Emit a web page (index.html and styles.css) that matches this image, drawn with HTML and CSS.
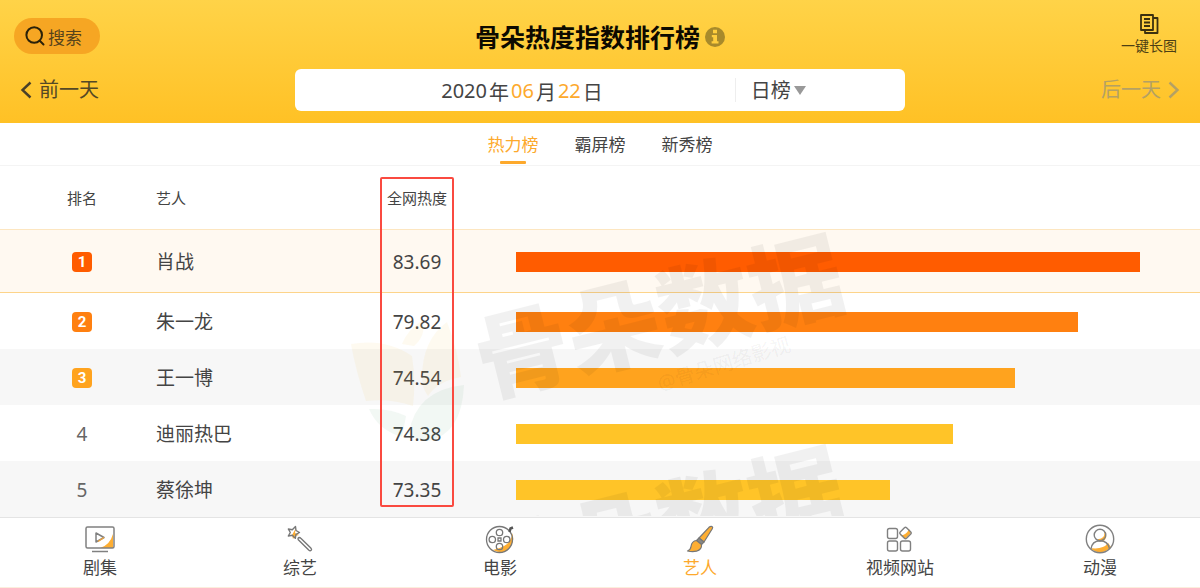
FILE: index.html
```html
<!DOCTYPE html>
<html lang="zh-CN">
<head>
<meta charset="utf-8">
<meta name="viewport" content="width=device-width, initial-scale=1">
<title>骨朵热度指数排行榜</title>
<link rel="stylesheet" href="styles.css">
</head>
<body>
<header class="header">
  <div class="header-top">
    <button class="search" type="button">
      <svg width="20" height="20" viewBox="0 0 20 20" fill="none" stroke="#2b2109" stroke-width="2" stroke-linecap="round"><circle cx="9.200" cy="9" r="7.800"/><path d="M15 15l3.500 3.500"/></svg>
      搜索
    </button>
    <div class="title-group">
      <h1 class="title">骨朵热度指数排行榜</h1>
      <button class="info" type="button" aria-label="说明">
        <svg width="20" height="20" viewBox="0 0 20 20"><circle cx="10" cy="10" r="10" fill="#a88a2b"/><path fill="#ffce3d" d="M8 2.800h4v3.400H8zM6.800 8H12v6.300h1.500v2.200H6.600v-2.200h1.600v-4.100H6.800z"/></svg>
      </button>
    </div>
    <button class="long-image" type="button">
      <svg width="19" height="20" viewBox="0 0 19 20" fill="none" stroke="#3b300f" stroke-width="1.800" stroke-linejoin="round"><path d="M1 1h12v15H1zM13 4h4.500v15H5v-3M4 5h6M4 8.500h6M4 12h6"/></svg>
      一键长图
    </button>
  </div>
  <div class="header-date">
    <button class="day prev" type="button">
      <svg width="12" height="18" viewBox="0 0 12 18" fill="none" stroke="#4a4028" stroke-width="2.400"><path d="M10.500 1.500L2.500 9l8 7.500"/></svg>
      前一天
    </button>
    <div class="picker">
      <button class="date" type="button"><span>2020</span><span>年</span><span class="accent">06</span><span>月</span><span class="accent">22</span><span>日</span></button>
      <label class="period">
        <select class="period-select" aria-label="榜单周期"><option>日榜</option><option>周榜</option><option>月榜</option></select>
        <svg width="12" height="9" viewBox="0 0 12 9"><path d="M0 0h12L6 9z" fill="#999"/></svg>
      </label>
    </div>
    <button class="day next" type="button" disabled>
      后一天
      <svg width="12" height="18" viewBox="0 0 12 18" fill="none" stroke="#b4a164" stroke-width="2.400"><path d="M1.500 1.500l8 7.500-8 7.500"/></svg>
    </button>
  </div>
</header>

<nav class="tabs" aria-label="榜单">
  <a class="tab active" href="#hot">热力榜</a>
  <a class="tab" href="#screen">霸屏榜</a>
  <a class="tab" href="#new">新秀榜</a>
</nav>

<main class="board">
  <table class="ranking">
    <thead>
      <tr><th class="rank">排名</th><th class="artist">艺人</th><th class="heat">全网热度</th><th class="chart" aria-label="热度图"></th></tr>
    </thead>
    <tbody>
      <tr class="top"><td class="rank"><span class="badge first">1</span></td><td class="artist">肖战</td><td class="heat">83.69</td><td class="chart"><div class="bar first" style="width:100%"></div></td></tr>
      <tr><td class="rank"><span class="badge second">2</span></td><td class="artist">朱一龙</td><td class="heat">79.82</td><td class="chart"><div class="bar second" style="width:90%"></div></td></tr>
      <tr><td class="rank"><span class="badge third">3</span></td><td class="artist">王一博</td><td class="heat">74.54</td><td class="chart"><div class="bar third" style="width:80%"></div></td></tr>
      <tr><td class="rank">4</td><td class="artist">迪丽热巴</td><td class="heat">74.38</td><td class="chart"><div class="bar" style="width:70%"></div></td></tr>
      <tr><td class="rank">5</td><td class="artist">蔡徐坤</td><td class="heat">73.35</td><td class="chart"><div class="bar" style="width:60%"></div></td></tr>
    </tbody>
  </table>
  <svg class="watermark" width="520" height="350" viewBox="0 0 520 350" aria-hidden="true">
    <g fill="#f0c040" fill-opacity=".08">
      <path d="M3 178Q38 172 64 190Q68 215 65 240Q42 232 18 235Q8 206 3 178z"/>
      <path d="M54 178Q60 163 75 154Q78 170 66 180z"/>
      <path d="M74 212Q74 174 99 156Q110 184 113 211Q90 215 80 230Q74 222 74 212z"/>
    </g>
    <g fill="#40a060" fill-opacity=".07">
      <path d="M21 243Q42 242 58 250L54 271Q30 264 21 243z"/>
      <path d="M116 219Q114 268 80 275Q68 275 61 267Q68 224 116 219z"/>
    </g>
    <g fill="#000" fill-opacity=".055">
      <text class="mark-name" transform="translate(137 230) rotate(-14)">骨朵数据</text>
      <text class="mark-name" transform="translate(137 442) rotate(-14)">骨朵数据</text>
      <text class="mark-note" transform="translate(312 225) rotate(-17)">@骨朵网络影视</text>
    </g>
  </svg>
  <div class="highlight"></div>
</main>

<nav class="dock" aria-label="频道">
  <a class="dock-item" href="#drama">
    <svg width="30" height="30" viewBox="0 0 30 30" fill="none" stroke="#808080" stroke-width="1.500"><path d="M28 10v14H15Q25 21 28 10z" fill="#fdae33" stroke="none"/><rect x="1" y="3" width="28" height="21" rx="1.500"/><path d="M11 9v9l8-4.500z" stroke-linejoin="round"/><path d="M13 17.500l6-4" stroke="#f0a33a"/><path d="M7 27.500h16"/></svg>
    剧集
  </a>
  <a class="dock-item" href="#variety">
    <svg width="30" height="30" viewBox="0 0 30 30" fill="none" stroke="#777" stroke-width="1.400" stroke-linejoin="round"><path d="M11 4l-1 5 4 2-4 1-2 3-1-4z" fill="#fdae33" stroke="none"/><path d="M10.500 2.500l.5 4 3.500 2-3.500 1.800-.7 4-3-3-4 .7 2-3.500-2-3.500 4 .8z"/><path d="M13.300 15.800q-.8-1.800.8-2.300 1 0 1.700.8l10 9.700q1.300 1.300.4 2.300-1.100.9-2.500-.3z"/></svg>
    综艺
  </a>
  <a class="dock-item" href="#movie">
    <svg width="30" height="30" viewBox="0 0 30 30" fill="none" stroke="#777" stroke-width="1.300"><path d="M27 9Q27 22 8 26Q20 32 26 22Q30 16 27 9z" fill="#fdae33" stroke="none"/><circle cx="14.500" cy="15.500" r="13"/><circle cx="14.500" cy="8.500" r="3.200"/><circle cx="7.300" cy="15.500" r="3.200"/><circle cx="21.700" cy="15.500" r="3.200"/><circle cx="14.500" cy="22.500" r="3.200"/><path d="M13 14h3v3h-3z"/><path d="M24.500 8l1-3.500 2.500-1" stroke="#555" stroke-width="2.500"/></svg>
    电影
  </a>
  <a class="dock-item active" href="#artist">
    <svg width="30" height="30" viewBox="0 0 30 30" fill="#fdae33" stroke="#777" stroke-width="1.200" stroke-linejoin="round"><path d="M27 2.500q1.200.8.300 2.300L19 18l-5-4L24 3.300q1.700-1.500 3-.8z"/><path d="M14 14l5 4-2.500 2.500-5-4z" fill="#888"/><path d="M11.500 16.500l5 4q.5 5-5 6.700-4 1-9-.2 3-1 3.500-4.500.8-5.500 5.500-6z"/></svg>
    艺人
  </a>
  <a class="dock-item" href="#video">
    <svg width="30" height="30" viewBox="0 0 30 30" fill="none" stroke="#808080" stroke-width="1.400"><path d="M26 9l-6 6-5-4Q21 12 24 5z" fill="#fdae33" stroke="none"/><rect x="2.500" y="4.500" width="10" height="10" rx="2"/><rect x="2.500" y="17" width="10" height="10" rx="2"/><rect x="15.500" y="17" width="10" height="10" rx="2"/><rect x="16" y="4.500" width="9" height="9" rx="1.500" transform="rotate(45 20.500 9)"/></svg>
    视频网站
  </a>
  <a class="dock-item" href="#anime">
    <svg width="30" height="30" viewBox="0 0 30 30" fill="none" stroke="#808080" stroke-width="1.400"><path d="M20 8q1 7-7 8 6 2 7.500-3zM7 25q12 1 16-5l2 3Q17 31 7 25z" fill="#fdae33" stroke="#fdae33"/><circle cx="15" cy="15" r="13.700"/><circle cx="15" cy="11" r="5.800"/><path d="M6 25q1-8 9-8.200 8 .2 9.500 8"/></svg>
    动漫
  </a>
</nav>
</body>
</html>
```

FILE: styles.css
```css
* {
  box-sizing: border-box;
}

body {
  margin: 0;
  background: #fff;
  color: #444;
  font-family: "Noto Sans", "Noto Sans CJK SC", sans-serif;
}

button,
select {
  margin: 0;
  padding: 0;
  border: 0;
  background: none;
  color: inherit;
  font: inherit;
}

svg {
  display: block;
  flex: none;
}

a {
  color: inherit;
  text-decoration: none;
}

.header {
  padding: 11px 14px 12px;
  background: linear-gradient(#ffd348, #ffc125);
}

.header-top {
  display: grid;
  grid-template-columns: 1fr auto 1fr;
  align-items: center;
  height: 50px;
}

.search {
  display: flex;
  align-items: center;
  justify-self: start;
  gap: 3px;
  height: 36px;
  padding: 0 18px 0 11px;
  border-radius: 18px;
  background: #f6a623;
  color: #57431b;
  font-size: 17px;
}

.title-group {
  display: flex;
  align-items: center;
  gap: 5px;
  padding-top: 2px;
}

.title {
  margin: 0;
  color: #0d0a00;
  font-size: 25px;
  font-weight: 700;
  line-height: 36px;
}

.long-image {
  display: flex;
  flex-direction: column;
  align-items: center;
  justify-self: end;
  gap: 2px;
  padding: 0 9px 3px 0;
  color: #4d3f14;
  font-size: 14px;
  line-height: 20px;
}

.header-date {
  display: grid;
  grid-template-columns: 1fr 51% 1fr;
  grid-template-columns: 1fr 52% 1fr;
  align-items: center;
  margin-top: 8px;
}

.day {
  display: flex;
  align-items: center;
  gap: 7px;
  font-size: 20px;
  line-height: 28px;
}

.prev {
  justify-self: start;
  padding-left: 6px;
  color: #544825;
}

.next {
  justify-self: end;
  padding-right: 6px;
  color: #b4a164;
}

.picker {
  display: flex;
  align-items: center;
  height: 42px;
  border-radius: 6px;
  background: #fff;
  font-size: 20px;
}

.date {
  display: flex;
  flex: 1;
  justify-content: center;
  gap: 2px;
  padding: 2px 0 0 14px;
}

.accent {
  color: #fda92c;
}

.period {
  display: flex;
  align-items: center;
  gap: 3px;
  width: 170px;
  padding-left: 15px;
  border-left: 1px solid #eee;
}

.period-select {
  height: 24px;
  padding-top: 2px;
  line-height: 22px;
  appearance: none;
}

.tabs {
  display: flex;
  justify-content: center;
  gap: 36px;
  height: 43px;
  border-bottom: 1px solid #f4f4f4;
  font-size: 17px;
  line-height: 44px;
}

.tab.active {
  display: flex;
  flex-direction: column;
  align-items: center;
  color: #fda92c;
}

.tab.active::after {
  width: 26px;
  height: 3px;
  margin-top: -6px;
  border-radius: 1px;
  background: #fda92c;
  content: "";
}

.board {
  position: relative;
  overflow: hidden;
}

.ranking {
  width: 100%;
  border-spacing: 0;
  table-layout: fixed;
  font-size: 19px;
  line-height: 28px;
}

th,
td {
  height: 56px;
  padding: 1px 0 0;
  font-weight: 400;
  text-align: left;
}

th {
  height: 63px;
  padding-top: 0;
  font-size: 15px;
}

.rank {
  width: 13%;
  padding-left: 8px;
  text-align: center;
}

td.rank {
  color: #666;
}

.artist {
  width: 17%;
}

.heat {
  width: 10%;
  padding-right: 6px;
  text-align: center;
}

.chart {
  padding-right: 60px;
  padding-left: 36px;
}

.top td {
  height: 64px;
  padding-top: 2px;
  border-top: 1px solid #fde6c0;
  border-bottom: 1px solid #fdd48a;
  background: #fff9f1;
}

tbody tr:nth-child(odd) {
  background: #f7f7f7;
}

.badge {
  display: block;
  width: 20px;
  height: 20px;
  margin: 0 auto;
  border-radius: 4px;
  color: #fff;
  font-family: Roboto, sans-serif;
  font-size: 15px;
  font-weight: 700;
  line-height: 20px;
}

.bar {
  height: 20px;
  background: #ffc428;
}

.first {
  background: #ff5c00;
}

.second {
  background: #ff8010;
}

.third {
  background: #ffa31e;
}

.watermark {
  position: absolute;
  top: 0;
  left: 29%;
}

.mark-name {
  font-size: 94px;
  font-weight: 900;
}

.mark-note {
  font-size: 20px;
}

.highlight {
  position: absolute;
  top: 11px;
  bottom: 10px;
  left: 380px;
  width: 74px;
  border: 2px solid #fa4a40;
  border-radius: 2px;
}

.dock {
  display: grid;
  grid-template-columns: repeat(6, 1fr);
  height: 71px;
  border-top: 1px solid #e4e4e4;
  border-bottom: 1px solid #fbeedd;
  background: #fff;
}

.dock-item {
  display: flex;
  flex-direction: column;
  align-items: center;
  padding-top: 6px;
  font-size: 17px;
  line-height: 28px;
}

.dock-item.active {
  color: #fda92c;
}
```
